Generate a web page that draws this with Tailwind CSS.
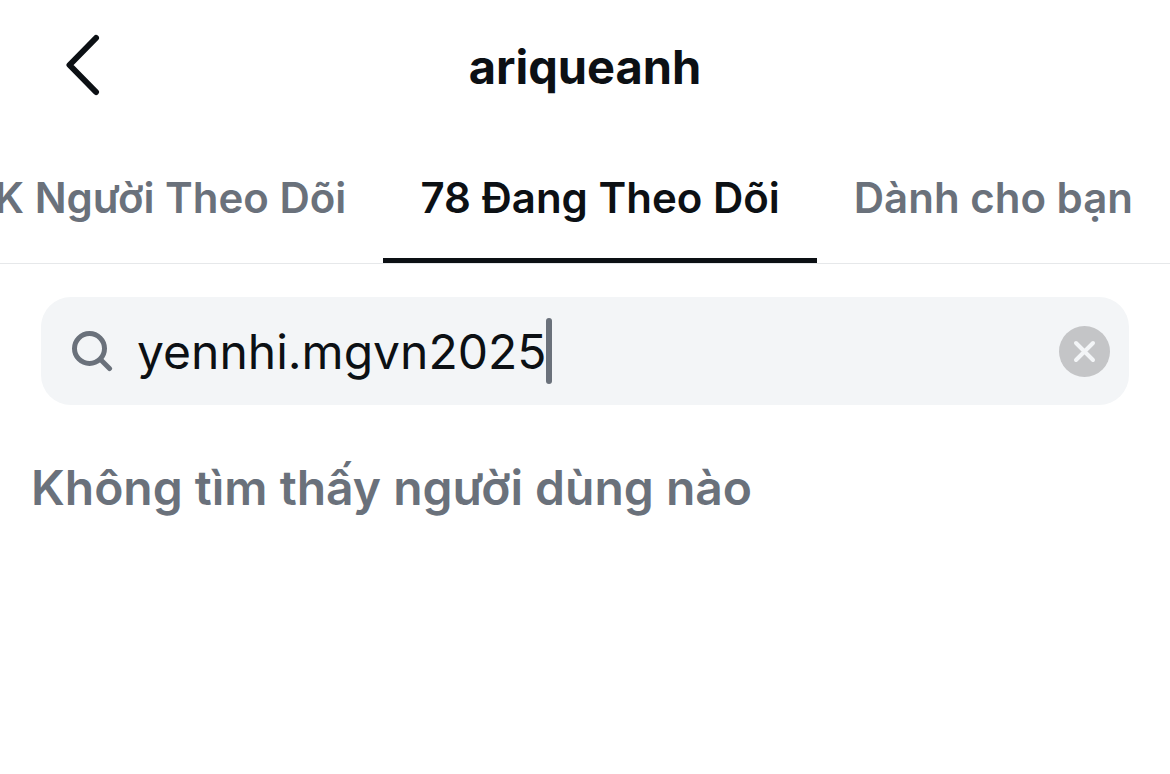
<!DOCTYPE html>
<html lang="vi">
  <head>
    <meta charset="UTF-8" />
    <meta name="viewport" content="width=device-width, initial-scale=1.0" />
    <title>ariqueanh</title>
    <script src="https://cdn.jsdelivr.net/npm/@tailwindcss/browser@4"></script>
  </head>
  <body class="bg-white font-['Inter',sans-serif] text-[#0c1014]">
    <!-- Header -->
    <header class="grid grid-cols-[1fr_auto_1fr] items-center h-[134px] px-[60px]">
      <button type="button" aria-label="Quay lại" class="w-11 h-[66px]">
        <svg class="w-11 h-[66px]" viewBox="0 0 44 66" fill="none" stroke="currentColor" stroke-width="6" stroke-linecap="round" stroke-linejoin="round">
          <path d="M36 4L9.500 31L36 58" />
        </svg>
      </button>
      <h1 class="text-[47px] leading-[60px] font-bold">ariqueanh</h1>
    </header>

    <!-- Tabs -->
    <nav class="flex justify-end overflow-hidden border-b border-[#e6e8ea] text-[42px] leading-[52px] font-semibold whitespace-nowrap text-[#6a717b]">
      <a href="#followers" class="shrink-0 px-[37px] pt-[38px] pb-[34px] border-b-5 border-transparent">K Người Theo Dõi</a>
      <a href="#following" aria-current="page" class="shrink-0 px-[37px] pt-[38px] pb-[34px] border-b-5 border-[#0c1014] text-[#0c1014]">78 Đang Theo Dõi</a>
      <a href="#suggested" class="shrink-0 px-[37px] pt-[38px] pb-[34px] border-b-5 border-transparent">Dành cho bạn</a>
    </nav>

    <main>
      <!-- Search box -->
      <form class="flex items-center h-[108px] mx-[41px] mt-[33px] pl-[30px] pr-[19px] rounded-[30px] bg-[#f3f5f7]">
        <label for="search" class="mr-6">
          <svg role="img" aria-label="Tìm kiếm" class="w-[42px] h-[42px] text-[#6a717b]" viewBox="0 0 42 42" fill="none" stroke="currentColor" stroke-width="5" stroke-linecap="round">
            <circle cx="18.500" cy="18.500" r="15" />
            <path d="M29.500 29.500L38.500 38.500" />
          </svg>
        </label>
        <input id="search" type="text" value="yennhi.mgvn2025" spellcheck="false" class="field-sizing-content pt-0.5 text-[48px] leading-[60px] outline-none" />
        <span class="w-1.5 h-[66px] rounded-full bg-[#6a717b]"></span>
        <button type="reset" aria-label="Xóa" class="ml-auto">
          <svg class="w-[51px] h-[51px]" viewBox="0 0 51 51" fill="none">
            <circle cx="25.500" cy="25.500" r="25.500" fill="#c4c5c7" />
            <path d="M17 17L34 34M34 17L17 34" stroke="#f3f5f7" stroke-width="4" stroke-linecap="round" />
          </svg>
        </button>
      </form>

      <p class="px-[31px] pt-[53px] text-[48px] leading-[60px] font-semibold text-[#6a717b]">Không tìm thấy người dùng nào</p>
    </main>
  </body>
</html>
